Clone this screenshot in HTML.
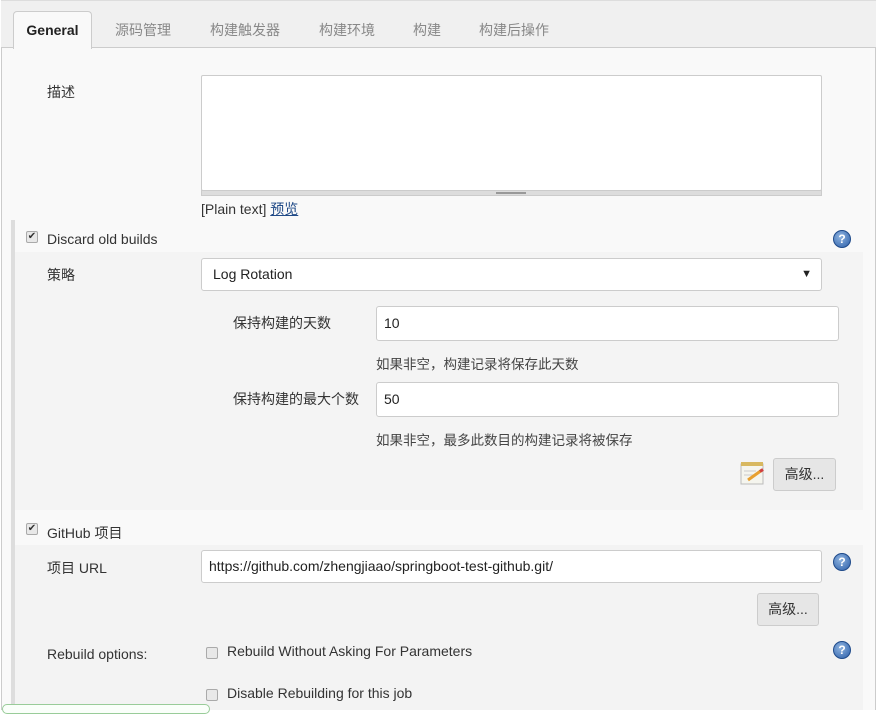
<!DOCTYPE html>
<html><head><meta charset="utf-8"><style>
*{box-sizing:border-box;margin:0;padding:0}
body{width:882px;height:710px;overflow:hidden;background:#fff;font-family:"Liberation Sans","Noto Sans CJK SC",sans-serif;font-size:14px;color:#333;position:relative}
.a{position:absolute}
.page{left:1px;top:0;width:875px;height:710px;background:#f9f9f9;border-left:1px solid #ccc;border-right:1px solid #ccc}
.tabs{left:1px;top:0;width:875px;height:48px;background:#f0f0f0;border-bottom:1px solid #ccc;border-top:1px solid #ddd}
.tab{top:20px;color:#888;font-size:14px}
.act{left:13px;top:11px;width:79px;height:38px;background:#f9f9f9;border:1px solid #ccc;border-bottom:none;border-radius:4px 4px 0 0;font-weight:bold;color:#222;text-align:center;line-height:37px}
.inp{background:#fff;border:1px solid #ccc;border-radius:3px;padding-left:7px;font-size:14px;color:#222}
.hint{font-size:13.5px;color:#444}
.btn{background:#e6e6e6;border:1px solid #ccc;border-radius:3px;text-align:center;font-size:14px;color:#333}
.cb{width:12px;height:12px;border:1px solid #aaa;border-radius:2px;background:#e8e8e8}
.help{width:18px;height:18px;border-radius:50%;background:radial-gradient(circle at 40% 35%,#8fb4e0,#2b5ea8);border:1px solid #1e4a8a;color:#fff;font-weight:bold;font-size:12px;text-align:center;line-height:16px}
</style></head><body>
<div class="a page"></div>
<div class="a tabs"></div>
<div class="a act">General</div>
<div class="a tab" style="left:115px">源码管理</div>
<div class="a tab" style="left:210px">构建触发器</div>
<div class="a tab" style="left:319px">构建环境</div>
<div class="a tab" style="left:413px">构建</div>
<div class="a tab" style="left:479px">构建后操作</div>

<div class="a" style="left:47px;top:82px">描述</div>
<div class="a inp" style="left:201px;top:75px;width:621px;height:116px;border-radius:2px"></div>
<div class="a" style="left:201px;top:190px;width:621px;height:6px;background:#ddd;border:1px solid #ccc"></div>
<div class="a" style="left:496px;top:192px;width:30px;height:2px;border-top:1px solid #999;border-bottom:1px solid #999"></div>
<div class="a" style="left:201px;top:199px">[Plain text] <span style="color:#204a87;text-decoration:underline">预览</span></div>

<div class="a" style="left:11px;top:220px;width:4px;height:490px;background:#ddd"></div>
<div class="a" style="left:15px;top:252px;width:848px;height:258px;background:#f4f4f4"></div>
<div class="a" style="left:15px;top:545px;width:848px;height:165px;background:#f3f3f3"></div>

<div class="a cb" style="left:26px;top:231px;font-size:10px;line-height:10px;text-align:center">✔</div>
<div class="a" style="left:47px;top:231px">Discard old builds</div>
<div class="a help" style="left:833px;top:230px">?</div>

<div class="a" style="left:47px;top:265px">策略</div>
<div class="a inp" style="left:201px;top:258px;width:621px;height:33px;line-height:31px;padding-left:11px">Log Rotation<span style="position:absolute;right:9px;font-size:11px">▼</span></div>

<div class="a" style="left:233px;top:313px">保持构建的天数</div>
<div class="a inp" style="left:376px;top:306px;width:463px;height:35px;line-height:33px">10</div>
<div class="a hint" style="left:376px;top:353px">如果非空，构建记录将保存此天数</div>
<div class="a" style="left:233px;top:389px">保持构建的最大个数</div>
<div class="a inp" style="left:376px;top:382px;width:463px;height:35px;line-height:33px">50</div>
<div class="a hint" style="left:376px;top:429px">如果非空，最多此数目的构建记录将被保存</div>
<svg class="a" style="left:740px;top:461px" width="26" height="25"><rect x="1" y="3" width="22" height="20" fill="#f5f5ee" stroke="#bbb"/><rect x="1" y="1" width="22" height="4" fill="#d8b860"/><line x1="4" y1="10" x2="16" y2="10" stroke="#ccc"/><line x1="4" y1="14" x2="14" y2="14" stroke="#ccc"/><line x1="8" y1="19" x2="22" y2="9" stroke="#e8a030" stroke-width="3"/><line x1="20" y1="10.5" x2="23" y2="8.5" stroke="#d04040" stroke-width="3"/></svg>
<div class="a btn" style="left:773px;top:458px;width:63px;height:33px;line-height:31px">高级...</div>

<div class="a cb" style="left:26px;top:523px;font-size:10px;line-height:10px;text-align:center">✔</div>
<div class="a" style="left:47px;top:523px">GitHub 项目</div>
<div class="a" style="left:47px;top:558px">项目 URL</div>
<div class="a inp" style="left:201px;top:550px;width:621px;height:33px;line-height:31px">https://github.com/zhengjiaao/springboot-test-github.git/</div>
<div class="a help" style="left:833px;top:553px">?</div>
<div class="a btn" style="left:757px;top:593px;width:62px;height:33px;line-height:31px">高级...</div>

<div class="a" style="left:47px;top:646px">Rebuild options:</div>
<div class="a cb" style="left:206px;top:647px"></div>
<div class="a" style="left:227px;top:643px">Rebuild Without Asking For Parameters</div>
<div class="a help" style="left:833px;top:641px">?</div>
<div class="a cb" style="left:206px;top:689px"></div>
<div class="a" style="left:227px;top:685px">Disable Rebuilding for this job</div>
<div class="a" style="left:2px;top:704px;width:208px;height:10px;border:1px solid #9c9;border-radius:5px;background:#fafffa"></div>
</body></html>
